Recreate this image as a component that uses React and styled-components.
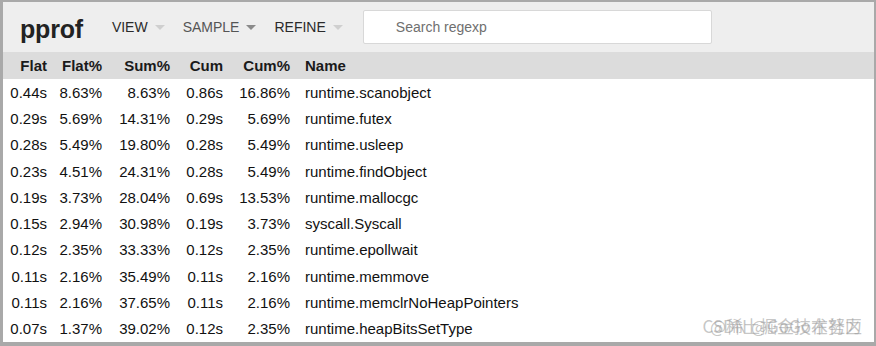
import React from "react"
import styled, {createGlobalStyle} from "styled-components"

const GlobalStyle = createGlobalStyle`
    html, body {
        margin: 0;
        padding: 0;
        background: #fff;
    }
    * {
        box-sizing: border-box;
    }
`

const rows = [
    ["0.44s", "8.63%", "8.63%", "0.86s", "16.86%", "runtime.scanobject"],
    ["0.29s", "5.69%", "14.31%", "0.29s", "5.69%", "runtime.futex"],
    ["0.28s", "5.49%", "19.80%", "0.28s", "5.49%", "runtime.usleep"],
    ["0.23s", "4.51%", "24.31%", "0.28s", "5.49%", "runtime.findObject"],
    ["0.19s", "3.73%", "28.04%", "0.69s", "13.53%", "runtime.mallocgc"],
    ["0.15s", "2.94%", "30.98%", "0.19s", "3.73%", "syscall.Syscall"],
    ["0.12s", "2.35%", "33.33%", "0.12s", "2.35%", "runtime.epollwait"],
    ["0.11s", "2.16%", "35.49%", "0.11s", "2.16%", "runtime.memmove"],
    ["0.11s", "2.16%", "37.65%", "0.11s", "2.16%", "runtime.memclrNoHeapPointers"],
    ["0.07s", "1.37%", "39.02%", "0.12s", "2.35%", "runtime.heapBitsSetType"],
]

const menus = [
    {label: "VIEW", dim: true},
    {label: "SAMPLE", dim: false},
    {label: "REFINE", dim: true},
]

const Frame = styled.div`
    position: relative;
    width: 876px;
    height: 346px;
    border: 2px solid #a9a9a9;
    border-left-width: 3px;
    border-bottom-width: 4px;
    font-family: "Liberation Sans", Arial, sans-serif;
    color: #1a1a1a;
    overflow: hidden;
`

const Header = styled.div`
    display: flex;
    align-items: center;
    height: 50px;
    padding-left: 17px;
    background: #eeeeee;
`

const Logo = styled.div`
    font-size: 25px;
    font-weight: bold;
    color: #222;
    margin-top: 4px;
    margin-right: 20px;
    letter-spacing: -0.2px;
`

const Menu = styled.div`
    display: flex;
    align-items: center;
    padding: 0 9px;
    font-size: 14px;
    color: ${p => p.dim ? "#2a2a2a" : "#555"};
    margin-right: ${p => p.last ? "11px" : "0"};
`

const Caret = styled.span`
    display: inline-block;
    width: 0;
    height: 0;
    margin-left: 7px;
    border-left: 5px solid transparent;
    border-right: 5px solid transparent;
    border-top: 5px solid ${p => p.dim ? "#cfcfcf" : "#8a8a8a"};
`

const Search = styled.div`
    width: 349px;
    height: 34px;
    display: flex;
    align-items: center;
    padding-left: 32px;
    background: #fff;
    border: 1px solid #d8d8d8;
    border-radius: 2px;
    font-size: 14px;
    color: #6f6f6f;
`

const Row = styled.div`
    display: grid;
    grid-template-columns: 49px 55px 68px 53px 67px 1fr;
    height: ${p => p.head ? "27px" : "26.3px"};
    align-items: center;
    background: ${p => p.head ? "#dcdcdc" : "#fff"};
    font-size: 15px;
    font-weight: ${p => p.head ? "bold" : "normal"};
    color: ${p => p.head ? "#1a1a1a" : "#111"};
`

const Num = styled.div`
    text-align: right;
    padding-right: 5px;
    white-space: nowrap;
`

const Name = styled.div`
    padding-left: 10px;
    white-space: nowrap;
`

const Watermark = styled.div`
    position: absolute;
    right: 12px;
    bottom: 4px;
    font-family: "Noto Sans CJK SC", "Liberation Sans", sans-serif;
    font-size: 17px;
    color: rgba(150, 150, 150, 0.55);
    white-space: nowrap;
`

export default function App() {
    return (
        <>
            <GlobalStyle/>
            <Frame>
                <Header>
                    <Logo>pprof</Logo>
                    {
                        menus.map((m, i) => (
                            <Menu key={m.label} dim={m.dim} last={i === menus.length - 1}>
                                {m.label}
                                <Caret dim={m.dim}/>
                            </Menu>
                        ))
                    }
                    <Search>Search regexp</Search>
                </Header>
                <Row head>
                    <Num>Flat</Num>
                    <Num>Flat%</Num>
                    <Num>Sum%</Num>
                    <Num>Cum</Num>
                    <Num>Cum%</Num>
                    <Name>Name</Name>
                </Row>
                {
                    rows.map((r, i) => (
                        <Row key={i}>
                            <Num>{r[0]}</Num>
                            <Num>{r[1]}</Num>
                            <Num>{r[2]}</Num>
                            <Num>{r[3]}</Num>
                            <Num>{r[4]}</Num>
                            <Name>{r[5]}</Name>
                        </Row>
                    ))
                }
                {/* two watermarks stamped over each other, as in the screenshot */}
                <Watermark>CSDN @GoGo在努力</Watermark>
                <Watermark>@稀土掘金技术社区</Watermark>
            </Frame>
        </>
    )
}
